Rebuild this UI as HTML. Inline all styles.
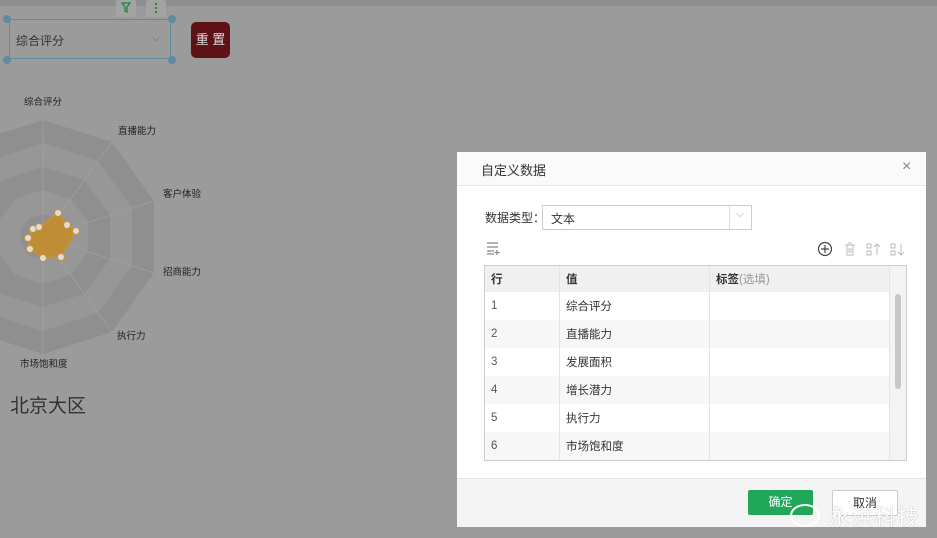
<!DOCTYPE html>
<html><head><meta charset="utf-8"><style>
body{margin:0;width:937px;height:538px;overflow:hidden;background:#9b9b9b;font-family:"Liberation Sans","Noto Sans CJK SC",sans-serif;position:relative}
.a{position:absolute}
.lbl{font-size:9.5px;color:#222}
td,th{font-size:11.5px;color:#333;text-align:left;font-weight:normal;padding:0 0 0 6px;border-right:1px solid #e4e4e4}
</style></head><body>
<div class="a" style="left:0;top:0;width:937px;height:6px;background:#8e8e8e"></div>
<div class="a" style="left:116px;top:0;width:20px;height:17px;background:#a3a3a3;border-radius:2px;color:#1a8a3a;font-size:12px;text-align:center">
<svg width="12" height="14" viewBox="0 0 12 14"><path d="M2 3h8l-3 4v5l-2-1V7z" fill="none" stroke="#1a8a3a" stroke-width="1.3"/></svg></div>
<div class="a" style="left:146px;top:0;width:20px;height:17px;background:#a3a3a3;border-radius:2px"><div class="a" style="left:9px;top:3px;width:2px;height:2px;background:#1a8a3a;box-shadow:0 4px #1a8a3a,0 8px #1a8a3a"></div></div>
<div class="a" style="left:9px;top:19px;width:162px;height:40px;border:1px solid #5f8c9c;box-sizing:border-box"></div>
<div class="a" style="left:16px;top:32px;font-size:12px;color:#333">综合评分</div>
<div class="a" style="left:152px;top:33px;font-size:10px;color:#666">⌵</div>
<div class="a" style="left:3px;top:15px;width:8px;height:8px;border-radius:50%;background:#5f8c9c;box-shadow:165px 0 #5f8c9c,0 41px #5f8c9c,165px 41px #5f8c9c"></div>
<div class="a" style="left:191px;top:22px;width:39px;height:36px;background:#5e1216;border-radius:5px;color:#ddd;font-size:13px;line-height:36px;text-align:center">重 置</div>
<svg class="a" style="left:0;top:0" width="260" height="380">
<g transform="translate(43,237)">
<polygon points="0,-117 69,-95 111,-36 111,36 69,95 0,117 -69,95 -111,36 -111,-36 -69,-95" fill="#8f8f8f"/>
<polygon points="0,-94 55,-76 89,-29 89,29 55,76 0,94 -55,76 -89,29 -89,-29 -55,-76" fill="#979797"/>
<polygon points="0,-70 41,-57 67,-22 67,22 41,57 0,70 -41,57 -67,22 -67,-22 -41,-57" fill="#8f8f8f"/>
<polygon points="0,-47 28,-38 45,-15 45,15 28,38 0,47 -28,38 -45,15 -45,-15 -28,-38" fill="#979797"/>
<polygon points="0,-23 14,-19 22,-7 22,7 14,19 0,23 -14,19 -22,7 -22,-7 -14,-19" fill="#8f8f8f"/>
<g stroke="#a2a2a2" stroke-width="0.7"><line x1="0" y1="0" x2="0" y2="-117"/><line x1="0" y1="0" x2="69" y2="-95"/><line x1="0" y1="0" x2="111" y2="-36"/><line x1="0" y1="0" x2="111" y2="36"/><line x1="0" y1="0" x2="69" y2="95"/><line x1="0" y1="0" x2="0" y2="117"/></g>
<polygon points="15,-24 24,-12 33,-6 18,20 0,21 -13,12 -15,1 -10,-8 -5,-9" fill="#bf8d35" stroke="#c89438" stroke-width="1.5"/>
<g fill="#ddd" stroke="#c89438"><circle cx="15" cy="-24" r="3.5"/><circle cx="24" cy="-12" r="3.5"/><circle cx="33" cy="-6" r="3.5"/><circle cx="18" cy="20" r="3.5"/><circle cx="0" cy="21" r="3.5"/><circle cx="-13" cy="12" r="3.5"/><circle cx="-15" cy="1" r="3.5"/><circle cx="-10" cy="-8" r="3.5"/><circle cx="-4" cy="-10" r="3.5"/></g>
</g></svg>
<div class="a lbl" style="left:24px;top:94px">综合评分</div>
<div class="a lbl" style="left:118px;top:123px">直播能力</div>
<div class="a lbl" style="left:163px;top:186px">客户体验</div>
<div class="a lbl" style="left:163px;top:264px">招商能力</div>
<div class="a lbl" style="left:117px;top:328px">执行力</div>
<div class="a lbl" style="left:20px;top:356px">市场饱和度</div>
<div class="a" style="left:10px;top:391px;font-size:19px;color:#333">北京大区</div>

<div class="a" style="left:457px;top:152px;width:469px;height:374px;background:#fff">
<div class="a" style="left:0;top:0;width:469px;height:33px;background:#fafafa;border-bottom:1px solid #e6e6e6"></div>
<div class="a" style="left:24px;top:8px;font-size:13px;color:#333">自定义数据</div>
<div class="a" style="left:445px;top:6px;font-size:16px;color:#888">×</div>
<div class="a" style="left:28px;top:57px;font-size:12px;color:#333">数据类型：</div>
<div class="a" style="left:85px;top:53px;width:208px;height:23px;border:1px solid #ccc"><span class="a" style="left:8px;top:4px;font-size:12px;color:#333">文本</span><div class="a" style="left:186px;top:0;width:1px;height:23px;background:#ddd"></div><span class="a" style="left:193px;top:3px;font-size:10px;color:#999">⌵</span></div>
<svg class="a" style="left:28px;top:88px" width="16" height="16"><path d="M2 3h11M2 7h11M2 11h7M2 14h7M12 10v5M9.5 12.5h5" stroke="#888" stroke-width="1.2" fill="none"/></svg>
<svg class="a" style="left:360px;top:88px" width="95" height="18"><circle cx="8" cy="9" r="6.5" fill="none" stroke="#444" stroke-width="1.2"/><path d="M8 5v8M4 9h8" stroke="#444" stroke-width="1.2"/><path d="M28 5h10M30 5v10h6V5M32 8v5M34 8v5M31 3h4" stroke="#bbb" fill="none"/><path d="M50 4h4v4h-4zM50 11h4v4h-4zM60 4v11M57 7l3-3 3 3" stroke="#bbb" fill="none"/><path d="M74 4h4v4h-4zM74 11h4v4h-4zM84 4v11M81 12l3 3 3-3" stroke="#bbb" fill="none"/></svg>
<div class="a" style="left:27px;top:113px;width:421px;height:194px;border:1px solid #ccc;overflow:hidden">
<table style="border-collapse:collapse;width:405px" cellspacing="0">
<tr style="height:26px;background:#f0f0f0"><th style="width:68px;font-weight:bold">行</th><th style="width:143px;font-weight:bold">值</th><th style="font-weight:bold">标签<span style="color:#999;font-weight:normal">(选填)</span></th></tr>
<tr style="height:28px"><td style="color:#555">1</td><td>综合评分</td><td></td></tr>
<tr style="height:28px;background:#f7f7f7"><td style="color:#555">2</td><td>直播能力</td><td></td></tr>
<tr style="height:28px"><td style="color:#555">3</td><td>发展面积</td><td></td></tr>
<tr style="height:28px;background:#f7f7f7"><td style="color:#555">4</td><td>增长潜力</td><td></td></tr>
<tr style="height:28px"><td style="color:#555">5</td><td>执行力</td><td></td></tr>
<tr style="height:28px;background:#f7f7f7"><td style="color:#555">6</td><td>市场饱和度</td><td></td></tr>
</table>
<div class="a" style="left:405px;top:0;width:16px;height:194px;background:#f3f3f3"></div>
<div class="a" style="left:410px;top:28px;width:6px;height:95px;background:#c8c8c8;border-radius:3px"></div>
</div>
<div class="a" style="left:0;top:326px;width:469px;height:48px;background:#f4f4f4;border-top:1px solid #e6e6e6"></div>
<div class="a" style="left:291px;top:338px;width:65px;height:25px;background:#1fa85a;border-radius:2px;color:#fff;font-size:12px;line-height:25px;text-align:center">确定</div>
<div class="a" style="left:375px;top:338px;width:64px;height:24px;background:#fff;border:1px solid #ccc;border-radius:2px;color:#333;font-size:12px;line-height:24px;text-align:center">取消</div>
</div>
<div class="a" style="left:828px;top:500px;font-size:22px;color:#fff;letter-spacing:1px;text-shadow:0 0 1px #888">永洪科技</div>
<div class="a" style="left:790px;top:504px;width:26px;height:19px;border:2px solid #fff;border-radius:50%"></div>
</body></html>
